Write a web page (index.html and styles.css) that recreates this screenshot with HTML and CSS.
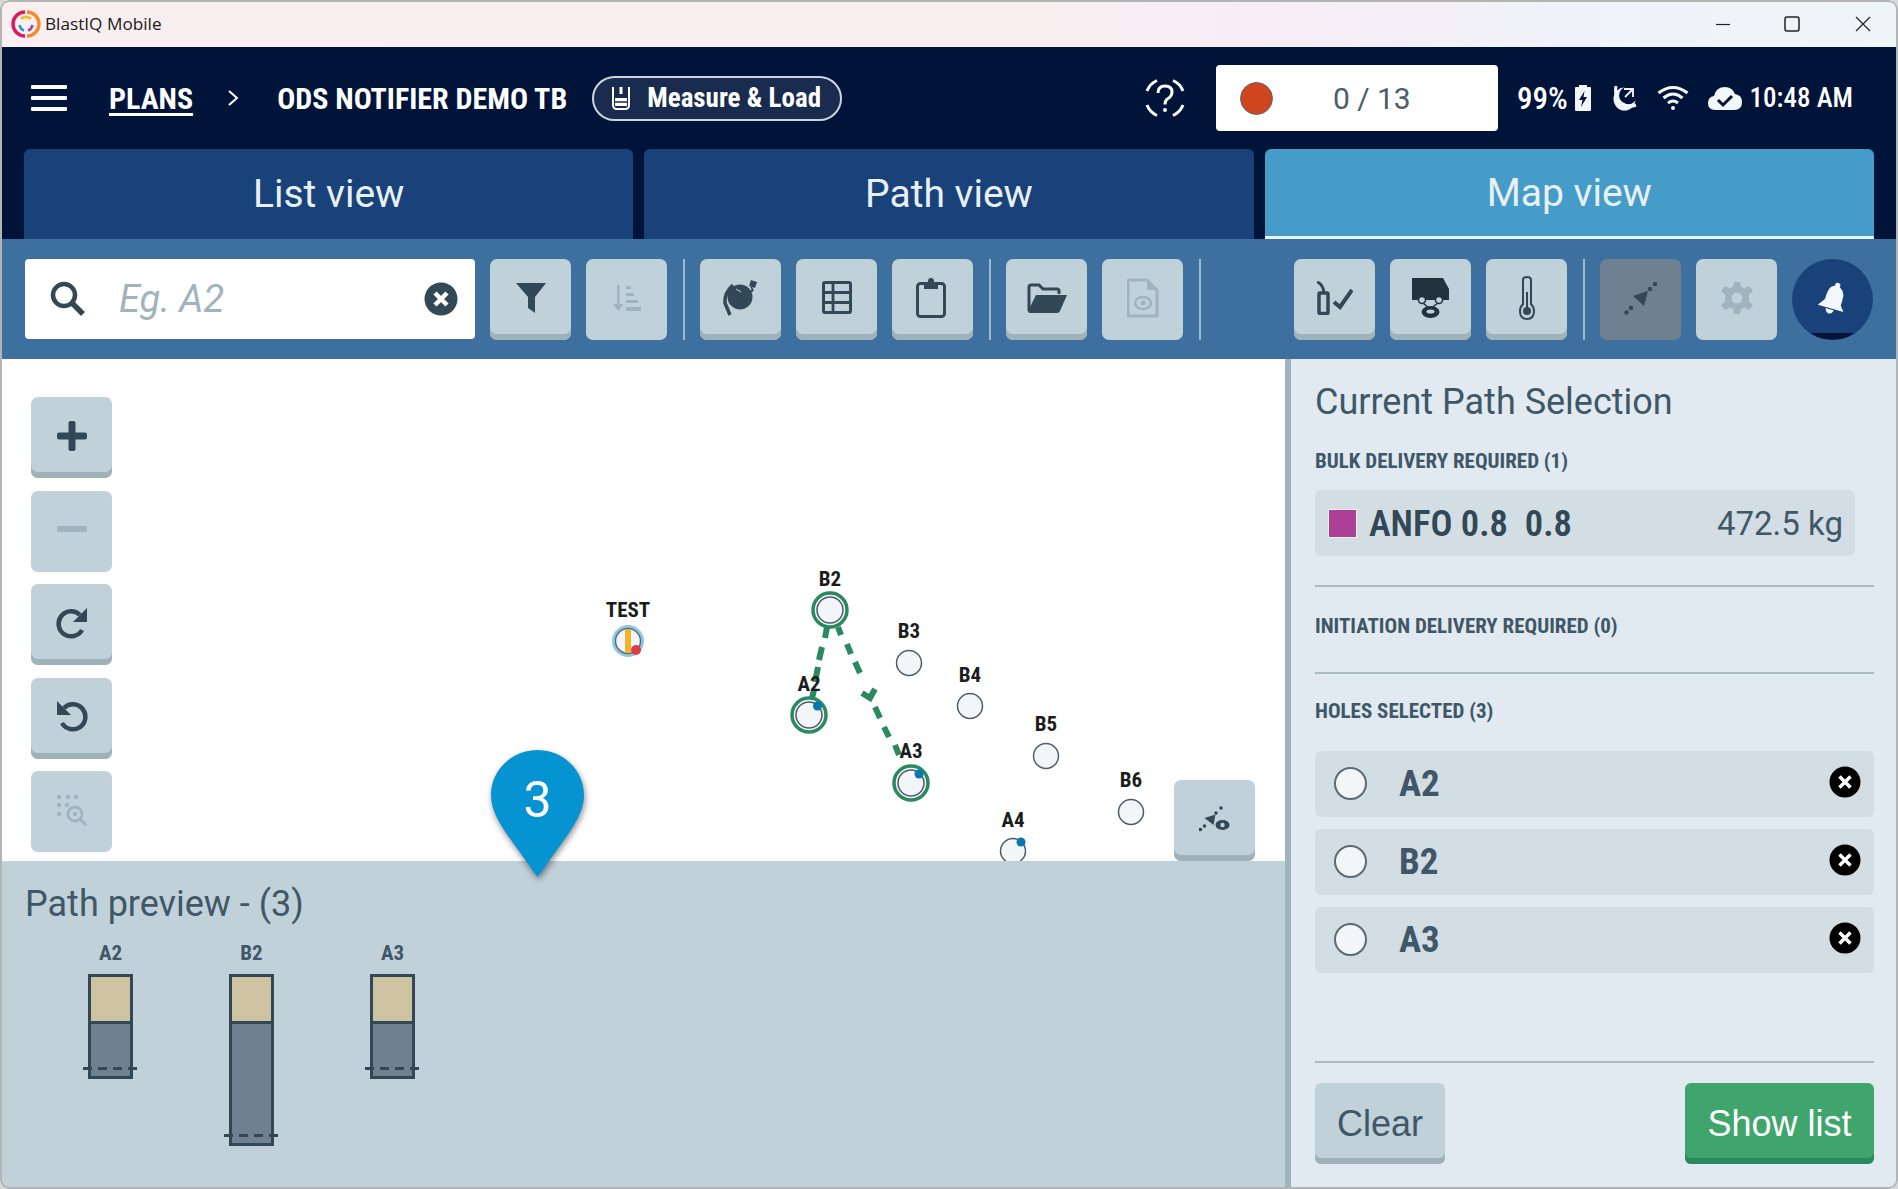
FILE: index.html
```html
<!DOCTYPE html>
<html lang="en">
<head>
  <meta charset="UTF-8" />
  <title>BlastIQ Mobile</title>
  <link rel="stylesheet" href="styles.css">
</head>
<body>
<div class="window">

  <div class="titlebar">
    <svg class="logo" width="30" height="30" viewBox="0 0 30 30" fill="none">
      <path d="M14 3 A12 12 0 0 0 14 27" stroke="#d81b60" stroke-width="3.4"/>
      <path d="M16 3 A12 12 0 0 1 16 27" stroke="#f28a30" stroke-width="3.4"/>
      <path d="M10 10 A7 7 0 0 1 20 10" stroke="#f0c020" stroke-width="2.6"/>
      <path d="M8.5 16 A7 7 0 0 0 13 21.5" stroke="#1e9ad6" stroke-width="2.6"/>
      <path d="M17 21.5 A7 7 0 0 0 21.5 16" stroke="#a83fb0" stroke-width="2.6"/>
    </svg>
    <span class="app-name">BlastIQ Mobile</span>
    <div class="win-controls">
      <svg width="16" height="16" viewBox="0 0 16 16"><path d="M1 8.5H15" stroke="#222" stroke-width="1.2"/></svg>
      <svg width="16" height="16" viewBox="0 0 16 16" fill="none"><rect x="1" y="1" width="14" height="14" rx="2" stroke="#222" stroke-width="1.5"/></svg>
      <svg class="win-close" width="16" height="16" viewBox="0 0 16 16"><path d="M1 1L15 15M15 1L1 15" stroke="#222" stroke-width="1.2"/></svg>
    </div>
  </div>

  <header class="appbar">
    <div class="burger"><span></span><span></span><span></span></div>
    <a class="crumb-link narrow">PLANS</a>
    <svg class="crumb-sep" width="12" height="18" viewBox="0 0 12 18" fill="none"><path d="M2 2L10 9L2 16" stroke="#fff" stroke-width="2"/></svg>
    <span class="crumb-title narrow">ODS NOTIFIER DEMO TB</span>
    <div class="pill">
      <svg width="20" height="26" viewBox="0 0 20 26" fill="none">
        <path d="M2 2V20Q2 24 6 24H14Q18 24 18 20V2" stroke="#fff" stroke-width="2"/>
        <path d="M4 13H16V21H4Z" fill="#fff"/>
        <path d="M10 2V9" stroke="#fff" stroke-width="3"/>
        <path d="M4 17H16" stroke="#192b4e" stroke-width="1.5"/>
      </svg>
      <span class="pill-text narrow">Measure &amp; Load</span>
    </div>

    <div class="appbar-right">
      <svg class="help" width="42" height="42" viewBox="0 0 42 42" fill="none" stroke="#fff" stroke-width="3">
        <path d="M3 14A19 19 0 0 1 13 3.500"/>
        <path d="M29 3.500A19 19 0 0 1 39 14"/>
        <path d="M39 28A19 19 0 0 1 29 38.500"/>
        <path d="M13 38.500A19 19 0 0 1 3 28"/>
        <path d="M14 16Q14 9 21 9Q28 9 28 15Q28 19 24 21.500Q21 23 21 27.500" stroke-width="3"/>
        <circle cx="21" cy="33" r="2" fill="#fff" stroke="none"/>
      </svg>
      <div class="counter">
        <span class="rec-dot"></span>
        <span class="counter-text">0 / 13</span>
      </div>
      <span class="status-text pct">99%</span>
      <svg class="st-batt" width="18" height="28" viewBox="0 0 18 28">
        <path d="M5 1H13V3H16Q17 3 17 4V26Q17 27 16 27H2Q1 27 1 26V4Q1 3 2 3H5Z" fill="#f4f7f9"/>
        <path d="M10.500 7L5 16H8.500L7 23L13 13H9.500Z" fill="#001339"/>
      </svg>
      <svg class="st-dish" width="26" height="26" viewBox="0 0 26 26" fill="none">
        <ellipse cx="11.500" cy="14" rx="11" ry="11.500" fill="#f4f7f9"/>
        <ellipse cx="15" cy="10.500" rx="9" ry="9" fill="#001339"/>
        <path d="M3 1Q1 12 8 18Q15 23 23 20" stroke="#f4f7f9" stroke-width="3"/>
        <path d="M11 4H20V12" stroke="#f4f7f9" stroke-width="1.800"/>
        <path d="M12 12L20 4" stroke="#f4f7f9" stroke-width="1.800"/>
      </svg>
      <svg class="st-wifi" width="32" height="26" viewBox="0 0 32 26" fill="none" stroke="#f4f7f9" stroke-width="3">
        <path d="M1.500 8Q16 -3 30.500 8"/>
        <path d="M6.500 13Q16 5 25.500 13"/>
        <path d="M11 18Q16 14 21 18"/>
        <circle cx="16" cy="23" r="2" fill="#f4f7f9" stroke="none"/>
      </svg>
      <svg class="st-cloud" width="36" height="26" viewBox="0 0 36 26" fill="none">
        <path d="M8 25Q1 25 1 18Q1 12 7 11Q9 2 18 2Q25 2 28 9Q35 10 35 17Q35 25 27 25Z" fill="#f4f7f9"/>
        <path d="M11 15L16 20L25 11" stroke="#001339" stroke-width="3"/>
      </svg>
      <span class="status-text clock">10:48 AM</span>
    </div>
  </header>

  <nav class="tabs">
    <div class="tab">List view</div>
    <div class="tab">Path view</div>
    <div class="tab tab-active">Map view</div>
  </nav>

  <div class="toolbar">
    <div class="search">
      <svg class="search-icon" width="38" height="38" viewBox="0 0 38 38" fill="none" stroke="#324857">
        <circle cx="15" cy="15" r="11" stroke-width="4.500"/>
        <path d="M23 23L34 34" stroke-width="5.500"/>
      </svg>
      <span class="placeholder">Eg. A2</span>
      <svg class="search-clear" width="34" height="34" viewBox="0 0 34 34">
        <circle cx="17" cy="17" r="16.500" fill="#324857"/>
        <path d="M11 11L23 23M23 11L11 23" stroke="#fff" stroke-width="4.500"/>
      </svg>
    </div>
    <button class="tool">
      <svg width="30" height="30" viewBox="0 0 30 30"><path d="M0 0H30L19 14V30L12 25V14Z" fill="#324857"/></svg>
    </button>
    <button class="tool tool-off">
      <svg width="28" height="28" viewBox="0 0 28 28" fill="#a0b4bd">
        <path d="M4 1H6.500V20H10.500L5.250 27L0 20H4Z"/>
        <rect x="13" y="2" width="5" height="3"/><rect x="13" y="9" width="8" height="3"/>
        <rect x="13" y="16" width="12" height="3"/><rect x="13" y="23" width="15" height="4"/>
      </svg>
    </button>
    <span class="tool-sep"></span>
    <button class="tool">
      <svg width="38" height="38" viewBox="0 0 38 38" fill="none">
        <circle cx="18" cy="18" r="12.500" fill="#324857"/>
        <path d="M29 8Q33 13 27 12" stroke="#324857" stroke-width="2"/>
        <path d="M29 1L35 3L33 9L27 7Z" fill="#324857"/>
        <path d="M11 6Q2 14 3 24L8 36" stroke="#324857" stroke-width="3.500"/>
        <path d="M14 10L19 13" stroke="#c0d1da" stroke-width="1"/>
      </svg>
    </button>
    <button class="tool">
      <svg width="30" height="33" viewBox="0 0 30 33" fill="none" stroke="#324857">
        <rect x="1.500" y="1.500" width="27" height="30" rx="1.500" stroke-width="3"/>
        <path d="M11 2V31M2 11.500H28M2 21.500H28" stroke-width="2.800"/>
      </svg>
    </button>
    <button class="tool tool-clip">
      <svg width="30" height="41" viewBox="0 0 30 41" fill="none">
        <rect x="1.500" y="6.500" width="27" height="33" rx="3" stroke="#324857" stroke-width="3"/>
        <path d="M8 7H12V4Q12 1 15 1Q18 1 18 4V7H22V12H8Z" fill="#324857"/>
      </svg>
    </button>
    <span class="tool-sep"></span>
    <button class="tool">
      <svg width="40" height="30" viewBox="0 0 40 30" fill="none">
        <path d="M2 28V4Q2 2 4 2H12L16 6H30Q32 6 32 8V11" stroke="#324857" stroke-width="3"/>
        <path d="M9 12H40L33 28Q32 30 30 30H4Q1 30 1 28Z" fill="#324857"/>
      </svg>
    </button>
    <button class="tool tool-off">
      <svg width="32" height="40" viewBox="0 0 32 40" fill="none">
        <path d="M2 2H20L30 12V37Q30 38 29 38H2Q1 38 1 37V3Q1 2 2 2Z" stroke="#a0b4bd" stroke-width="3"/>
        <path d="M20 1L31 12H20Z" fill="#a0b4bd"/>
        <ellipse cx="16" cy="25" rx="8" ry="6" stroke="#a0b4bd" stroke-width="2.500"/>
        <circle cx="16" cy="25" r="2.500" fill="#a0b4bd"/>
      </svg>
    </button>
    <span class="tool-sep"></span>

    <div class="toolbar-right">
      <button class="tool">
        <svg width="36" height="34" viewBox="0 0 36 34" fill="none" stroke="#324857">
          <rect x="2" y="12" width="9" height="20.500" rx="1" stroke-width="3.500"/>
          <path d="M0 1Q6 3 7 12" stroke-width="3"/>
          <path d="M17 21L23 26L35 9" stroke-width="4"/>
        </svg>
      </button>
      <button class="tool">
        <svg width="38" height="42" viewBox="0 0 38 42">
          <path d="M0 1H24L31 1L37 12V23H0Z" fill="#22333e"/>
          <circle cx="10" cy="23" r="3.500" fill="#c0d1da" stroke="#22333e" stroke-width="1.500"/>
          <circle cx="27" cy="23" r="3.500" fill="#c0d1da" stroke="#22333e" stroke-width="1.500"/>
          <path d="M11 26L18 32L26 26" fill="none" stroke="#22333e" stroke-width="1.500"/>
          <ellipse cx="18.500" cy="35" rx="9" ry="6" fill="#22333e"/>
          <ellipse cx="18.500" cy="34.500" rx="4" ry="2" fill="#c0d1da"/>
        </svg>
      </button>
      <button class="tool">
        <svg width="16" height="44" viewBox="0 0 16 44" fill="none" stroke="#324857">
          <path d="M4 28V4Q4 1 8 1Q12 1 12 4V28Q15 31 15 35Q15 43 8 43Q1 43 1 35Q1 31 4 28Z" stroke-width="2"/>
          <path d="M8 16V32" stroke-width="2"/>
          <circle cx="8" cy="35" r="4" fill="#324857" stroke="none"/>
        </svg>
      </button>
      <span class="tool-sep"></span>
      <button class="tool tool-on">
        <svg width="34" height="34" viewBox="0 0 34 34" fill="#324857">
          <circle cx="2.500" cy="31.500" r="2.200"/><circle cx="7" cy="27" r="2.200"/>
          <circle cx="26" cy="8" r="2.200"/><circle cx="31" cy="3" r="2.200"/>
          <path d="M24 10L20 25L9 15Z"/>
        </svg>
      </button>
      <button class="tool tool-off">
        <svg width="32" height="32" viewBox="0 0 32 32">
          <path fill="#a0b4bd" fill-rule="evenodd" d="M13 0H19L20 5L23.500 6.500L28 4L32 9L28 12.500V19.500L32 23L28 28L23.500 25.500L20 27L19 32H13L12 27L8.500 25.500L4 28L0 23L4 19.500V12.500L0 9L4 4L8.500 6.500L12 5ZM16 10.500A5.500 5.500 0 1 0 16 21.500A5.500 5.500 0 1 0 16 10.500Z"/>
        </svg>
      </button>
      <button class="bell-btn">
        <svg width="30" height="32" viewBox="0 0 28 30">
          <g transform="rotate(16 14 15)" fill="#f4f7f9">
            <circle cx="15" cy="2.500" r="2.500"/>
            <path d="M15 3Q23 5 23 13V20L27 25H2L7 18Q7 7 10 5Q12 3 15 3Z"/>
            <path d="M10 26H18Q17 30 14 30Q11 30 10 26Z"/>
          </g>
        </svg>
      </button>
    </div>
  </div>

  <main class="main">
    <section class="left">
      <div class="map">
        <svg class="map-canvas" viewBox="0 359 1285 502">
          <path class="hole-links" d="M827 627L825 638M822 647L819 660M818 667L815 682M814 690L812 698M838 627L841 635M847 644L851 654M855 662L860 673M875 707L880 718M884 727L889 737M895 745L899 755"/>
          <path class="hole-links" d="M862 693L870 698L875 689"/>

          <text class="hole-label" x="628" y="617">TEST</text>
          <circle cx="628" cy="641" r="16" fill="#8cc8ea"/>
          <circle cx="628" cy="641" r="12.500" fill="#f2f6f8" stroke="#5a6a75" stroke-width="1.500"/>
          <rect x="625" y="629" width="6" height="24" fill="#f0b429"/>
          <circle cx="636" cy="650" r="5" fill="#e0394a"/>

          <text class="hole-label" x="830" y="586">B2</text>
          <circle class="hole-sel" cx="830" cy="610" r="17"/>
          <circle class="hole" cx="830" cy="610" r="13"/>

          <text class="hole-label" x="909" y="638">B3</text>
          <circle class="hole" cx="909" cy="663" r="12.500"/>
          <text class="hole-label" x="970" y="682">B4</text>
          <circle class="hole" cx="970" cy="706" r="12.500"/>
          <text class="hole-label" x="1046" y="731">B5</text>
          <circle class="hole" cx="1046" cy="756" r="12.500"/>
          <text class="hole-label" x="1131" y="787">B6</text>
          <circle class="hole" cx="1131" cy="812" r="12.500"/>

          <text class="hole-label" x="809" y="691">A2</text>
          <circle class="hole-sel" cx="809" cy="715" r="17"/>
          <circle class="hole" cx="809" cy="715" r="13"/>
          <circle class="hole-dot" cx="817.500" cy="706" r="4.500"/>

          <text class="hole-label" x="911" y="758">A3</text>
          <circle class="hole-sel" cx="911" cy="783" r="17"/>
          <circle class="hole" cx="911" cy="783" r="13"/>
          <circle class="hole-dot" cx="919" cy="774" r="4.500"/>

          <text class="hole-label" x="1013" y="827">A4</text>
          <circle class="hole" cx="1013" cy="851" r="12.500"/>
          <circle class="hole-dot" cx="1021" cy="842" r="4.500"/>
        </svg>

        <div class="map-controls">
          <button class="tool">
            <svg width="30" height="30" viewBox="0 0 30 30" fill="#324857"><rect x="11.500" width="7" height="30" rx="2"/><rect y="11.500" width="30" height="7" rx="2"/></svg>
          </button>
          <button class="tool tool-off">
            <svg width="30" height="8" viewBox="0 0 30 8"><rect y="1" width="30" height="6" rx="1.500" fill="#a0b4bd"/></svg>
          </button>
          <button class="tool">
            <svg width="32" height="32" viewBox="0 0 32 32" fill="none">
              <path d="M26 23A12.500 12.500 0 1 1 24 8" stroke="#324857" stroke-width="4.500"/>
              <path d="M31 1V15H17Z" fill="#324857"/>
            </svg>
          </button>
          <button class="tool">
            <svg width="32" height="32" viewBox="0 0 32 32" fill="none">
              <path d="M6 23A12.500 12.500 0 1 0 8 8" stroke="#324857" stroke-width="4.500"/>
              <path d="M1 1V15H15Z" fill="#324857"/>
            </svg>
          </button>
          <button class="tool tool-off">
            <svg width="32" height="32" viewBox="0 0 32 32" fill="#a0b4bd">
              <circle cx="3" cy="3" r="2.200"/><circle cx="12" cy="3" r="2.200"/><circle cx="20" cy="3" r="2.200"/>
              <circle cx="3" cy="11" r="2.200"/><circle cx="11" cy="11" r="2.200"/>
              <circle cx="3" cy="20" r="2.200"/>
              <circle cx="19" cy="20" r="7" fill="none" stroke="#a0b4bd" stroke-width="2.800"/>
              <circle cx="19" cy="20" r="2.200"/>
              <path d="M24 25L30 31" stroke="#a0b4bd" stroke-width="3"/>
            </svg>
          </button>
        </div>

        <button class="tool map-path-btn">
          <svg width="31" height="26" viewBox="0 0 31 26" fill="#324857">
            <circle cx="1.500" cy="23.500" r="1.800"/><circle cx="5.500" cy="20" r="1.800"/>
            <circle cx="17" cy="7" r="1.800"/><circle cx="22" cy="2" r="1.800"/>
            <path d="M5.500 12L16.500 8.500L14.500 19Z"/>
            <ellipse cx="23.500" cy="19" rx="7" ry="5"/>
            <circle cx="23.500" cy="19" r="2.200" fill="#c0d1da"/>
          </svg>
        </button>
      </div>

      <div class="preview">
        <h2 class="preview-title">Path preview - (3)</h2>
        <div class="preview-holes">
          <div class="stem-col">
            <span class="stem-label narrow">A2</span>
            <div class="stem" style="height: 105px"><span class="stem-top"></span><span class="stem-mark"></span></div>
          </div>
          <div class="stem-col">
            <span class="stem-label narrow">B2</span>
            <div class="stem" style="height: 172px"><span class="stem-top"></span><span class="stem-mark"></span></div>
          </div>
          <div class="stem-col">
            <span class="stem-label narrow">A3</span>
            <div class="stem" style="height: 105px"><span class="stem-top"></span><span class="stem-mark"></span></div>
          </div>
        </div>
      </div>

      <svg class="pin" width="93" height="127" viewBox="0 0 93 127">
        <path d="M46.500 0C72 0 93 20 93 45C93 60 85 72 78 83L46.500 127L15 83C8 72 0 60 0 45C0 20 21 0 46.500 0Z" fill="#0693d1"/>
        <text x="46.500" y="67" text-anchor="middle">3</text>
      </svg>
    </section>

    <aside class="side">
      <h2 class="side-title">Current Path Selection</h2>
      <h3 class="side-label narrow first">BULK DELIVERY REQUIRED (1)</h3>
      <div class="bulk-row">
        <span class="swatch"></span>
        <span class="bulk-name narrow">ANFO 0.8&nbsp; 0.8</span>
        <span class="bulk-qty">472.5 kg</span>
      </div>
      <hr class="rule rule-a">
      <h3 class="side-label narrow">INITIATION DELIVERY REQUIRED (0)</h3>
      <hr class="rule rule-b">
      <h3 class="side-label narrow">HOLES SELECTED (3)</h3>

      <div class="hole-list">
        <div class="hole-row">
          <span class="radio"></span>
          <span class="hole-name narrow">A2</span>
          <svg class="row-x" width="32" height="32" viewBox="0 0 32 32"><circle cx="16" cy="16" r="15.500"/><path d="M10.500 10.500L21.500 21.500M21.500 10.500L10.500 21.500" stroke="#fff" stroke-width="3.500"/></svg>
        </div>
        <div class="hole-row">
          <span class="radio"></span>
          <span class="hole-name narrow">B2</span>
          <svg class="row-x" width="32" height="32" viewBox="0 0 32 32"><circle cx="16" cy="16" r="15.500"/><path d="M10.500 10.500L21.500 21.500M21.500 10.500L10.500 21.500" stroke="#fff" stroke-width="3.500"/></svg>
        </div>
        <div class="hole-row">
          <span class="radio"></span>
          <span class="hole-name narrow">A3</span>
          <svg class="row-x" width="32" height="32" viewBox="0 0 32 32"><circle cx="16" cy="16" r="15.500"/><path d="M10.500 10.500L21.500 21.500M21.500 10.500L10.500 21.500" stroke="#fff" stroke-width="3.500"/></svg>
        </div>
      </div>

      <div class="side-footer">
        <button class="btn-clear">Clear</button>
        <button class="btn-show">Show list</button>
      </div>
    </aside>
  </main>
</div>
</body>
</html>
```

FILE: styles.css
```css
* {
  box-sizing: border-box;
}

html, body {
  margin: 0;
  padding: 0;
  background: #d8d8d8;
}

body {
  font-family: Roboto, sans-serif;
  overflow: hidden;
}

button {
  font-family: inherit;
  padding: 0;
  border: none;
}

.narrow {
  font-family: Roboto, sans-serif;
  font-stretch: 75%;
  font-weight: 700;
}

.window {
  position: relative;
  width: 1898px;
  height: 1189px;
  border-radius: 9px;
  overflow: hidden;
  background: #fff;
}

/* thin frame of the native window */
.window::after {
  content: "";
  position: absolute;
  inset: 0;
  border: 2px solid #b4b4b4;
  border-radius: 9px;
  pointer-events: none;
}

/* title bar */
.titlebar {
  height: 47px;
  display: flex;
  align-items: center;
  padding: 0 0 0 11px;
  background: linear-gradient(to right, #f9eff0 0%, #f8eef0 55%, #f8ecf4 65%, #eff3fa 85%, #eef5f7 100%);
}

.logo {
  margin-right: 4px;
}

.app-name {
  font-family: "Open Sans", sans-serif;
  font-size: 17.200px;
  color: #1a1a1a;
}

.win-controls {
  margin-left: auto;
  display: flex;
  gap: 53px;
  padding-right: 27px;
}

.win-close {
  margin-left: 2px;
}

/* dark header */
.appbar {
  height: 102px;
  background: #001339;
  display: flex;
  align-items: center;
  color: #fff;
  padding-left: 31px;
}

.burger {
  width: 36px;
  display: flex;
  flex-direction: column;
  gap: 7.500px;
}

.burger span {
  display: block;
  height: 3.500px;
  background: #fff;
  border-radius: 1px;
}

.crumb-link {
  margin-left: 42px;
  font-size: 30px;
  text-decoration: underline;
  text-underline-offset: 4px;
}

.crumb-sep {
  margin-left: 34px;
}

.crumb-title {
  margin-left: 38px;
  font-size: 30px;
}

.pill {
  margin-left: 25px;
  width: 250px;
  height: 45px;
  display: flex;
  align-items: center;
  gap: 16px;
  padding-left: 17px;
  background: #192b4e;
  border: 2px solid #cdd5de;
  border-radius: 23px;
}

.pill-text {
  font-size: 27px;
  font-weight: 700;
}

.appbar-right {
  margin-left: auto;
  display: flex;
  align-items: center;
  padding-right: 45px;
}

.help {
  margin-right: -2px;
}

.counter {
  margin-left: 32px;
  width: 282px;
  height: 66px;
  background: #fff;
  border-radius: 4px;
  display: flex;
  align-items: center;
  padding-left: 24px;
}

.rec-dot {
  width: 33px;
  height: 33px;
  border-radius: 50%;
  background: #cf4520;
  border: 1.500px solid #5a6a75;
}

.counter-text {
  margin-left: 60px;
  font-size: 30px;
  color: #4a5d6b;
}

.status-text {
  font-size: 27px;
  font-weight: 500;
  font-stretch: 75%;
}

.pct {
  margin-left: 19px;
  font-size: 31px;
}

.st-batt {
  margin-left: 6px;
}

.st-dish {
  margin-left: 21px;
}

.st-wifi {
  margin-left: 18px;
}

.st-cloud {
  margin-left: 18px;
}

.clock {
  margin-left: 7px;
}

/* view tabs */
.tabs {
  height: 90px;
  background: #001339;
  display: grid;
  grid-template-columns: repeat(3, 1fr);
  gap: 11px;
  padding: 0 24px;
}

.tab {
  background: #19427a;
  color: #e8f0f4;
  font-size: 39px;
  border-radius: 6px 6px 0 0;
  display: flex;
  align-items: center;
  justify-content: center;
}

.tab-active {
  background: #459cc8;
  border-bottom: 3px solid #eaf3f7;
}

/* toolbar */
.toolbar {
  height: 120px;
  background: #3d709f;
  display: flex;
  align-items: flex-start;
  gap: 15px;
  padding: 20px 25px 0;
}

.search {
  width: 450px;
  height: 80px;
  background: #fff;
  border-radius: 4px;
  display: flex;
  align-items: center;
  padding: 0 17px 0 24px;
}

.placeholder {
  margin-left: 32px;
  font-size: 38px;
  font-style: italic;
  color: #a0b4bd;
}

.search-clear {
  margin-left: auto;
}

.tool {
  width: 81px;
  height: 81px;
  flex: none;
  display: flex;
  align-items: center;
  justify-content: center;
  padding-bottom: 4px;
  background: #c0d1da;
  border-radius: 7px;
  box-shadow: inset 0 -6px 0 #9fb2ba;
}

.tool-clip {
  padding-right: 3px;
}

.tool-off {
  box-shadow: none;
}

.tool-on {
  background: #6d8191;
  box-shadow: none;
}

.tool-sep {
  width: 2px;
  height: 81px;
  flex: none;
  margin-left: 1px;
  background: #9db9cd;
}

.toolbar-right {
  margin-left: auto;
  display: flex;
  gap: 15px;
}

.bell-btn {
  width: 81px;
  height: 81px;
  flex: none;
  border-radius: 50%;
  background: linear-gradient(to bottom, #19427a 74px, #001339 74px);
  display: flex;
  align-items: center;
  justify-content: center;
  padding-bottom: 4px;
}

/* map + preview */
.main {
  height: 830px;
  display: grid;
  grid-template-columns: 1285px 1fr;
}

.left {
  position: relative;
  display: flex;
  flex-direction: column;
}

.map {
  position: relative;
  height: 502px;
  overflow: hidden;
  background: #fff;
}

.map-canvas {
  position: absolute;
  inset: 0;
  width: 1285px;
  height: 502px;
}

.hole-label {
  font-family: Roboto, sans-serif;
  font-size: 21px;
  font-weight: 700;
  font-stretch: 75%;
  text-anchor: middle;
  fill: #1c1c1c;
}

.hole {
  fill: #f2f6f8;
  stroke: #4c5c68;
  stroke-width: 1.500;
}

.hole-sel {
  fill: #f7f9fa;
  stroke: #2a8a5f;
  stroke-width: 3.500;
}

.hole-dot {
  fill: #0577b1;
}

.hole-links {
  stroke: #2a8a5f;
  stroke-width: 6;
  fill: none;
}

.map-controls {
  position: absolute;
  left: 31px;
  top: 38px;
  display: grid;
  gap: 12.500px;
}

.map-path-btn {
  position: absolute;
  left: 1174px;
  top: 421px;
}

.preview {
  flex: 1;
  background: #c0d1da;
  padding: 21px 0 0 25px;
}

.preview-title {
  margin: 0;
  font-size: 36px;
  line-height: 44px;
  font-weight: 400;
  color: #3f5766;
}

.preview-holes {
  display: flex;
  margin: 16px 0 0 15px;
}

.stem-col {
  width: 141px;
  display: flex;
  flex-direction: column;
  align-items: center;
}

.stem-label {
  font-size: 21px;
  line-height: 22px;
  color: #3f5766;
}

.stem {
  position: relative;
  width: 45px;
  margin-top: 10px;
  background: #6d8191;
  border: 3px solid #324857;
}

.stem-top {
  display: block;
  height: 47px;
  background: #cdc3a0;
  border-bottom: 3px solid #324857;
}

.stem-mark {
  position: absolute;
  left: -8px;
  right: -8px;
  bottom: 6px;
  height: 3px;
  background: repeating-linear-gradient(to right, #324857 0 9px, transparent 9px 15px);
}

.pin {
  position: absolute;
  left: 491px;
  top: 391px;
  filter: drop-shadow(1px 3px 3px rgba(0, 0, 0, 0.45));
}

.pin text {
  font-family: Roboto, sans-serif;
  font-size: 50px;
  fill: #fff;
}

/* right panel */
.side {
  display: flex;
  flex-direction: column;
  background: #e1eaf0;
  border-left: 6px solid #a0b4bd;
  padding: 0 24px;
  color: #3f5766;
}

.side-title {
  margin: 23px 0 0;
  font-size: 36px;
  line-height: 40px;
  font-weight: 400;
}

.side-label {
  margin: 0;
  font-size: 21px;
  line-height: 26px;
}

.side-label.first {
  margin-top: 26px;
}

.bulk-row {
  margin: 16px 19px 0 0;
  height: 66px;
  display: flex;
  align-items: center;
  padding: 0 12px 0 13px;
  background: #d3dee4;
  border-radius: 6px;
}

.swatch {
  width: 29px;
  height: 29px;
  background: #ac3f96;
  border: 1px solid #f4f4f8;
}

.bulk-name {
  margin-left: 12px;
  font-size: 36.500px;
  font-weight: 600;
  color: #324857;
}

.bulk-qty {
  margin-left: auto;
  font-size: 33px;
}

.rule {
  width: 100%;
  height: 2px;
  margin: 0;
  border: none;
  background: #a9bcc6;
}

.rule-a {
  margin: 29px 0 26px;
}

.rule-b {
  margin: 33px 0 24px;
}

.hole-list {
  margin-top: 27px;
  display: grid;
  gap: 12.500px;
}

.hole-row {
  height: 65.500px;
  display: flex;
  align-items: center;
  padding-left: 19px;
  background: #d3dee4;
  border-radius: 6px;
}

.radio {
  width: 33px;
  height: 33px;
  border-radius: 50%;
  background: #f2f6f8;
  border: 2px solid #5a6a75;
}

.hole-name {
  margin-left: 32px;
  font-size: 37px;
  font-weight: 700;
  color: #3f5766;
}

.row-x {
  margin: 0 13px 3px auto;
}

.side-footer {
  margin-top: auto;
  margin-bottom: 25px;
  padding-top: 20px;
  border-top: 2px solid #a9bcc6;
  display: flex;
  justify-content: space-between;
}

.btn-clear,
.btn-show {
  height: 81px;
  border-radius: 6px;
  font-family: "Liberation Sans", sans-serif;
  font-size: 36px;
}

.btn-clear {
  width: 130px;
  background: #c0d1da;
  color: #3f5766;
  box-shadow: inset 0 -6px 0 #9fb2ba;
}

.btn-show {
  width: 189px;
  background: #3fa56d;
  color: #fff;
  box-shadow: inset 0 -6px 0 #2a8a5f;
}
```
